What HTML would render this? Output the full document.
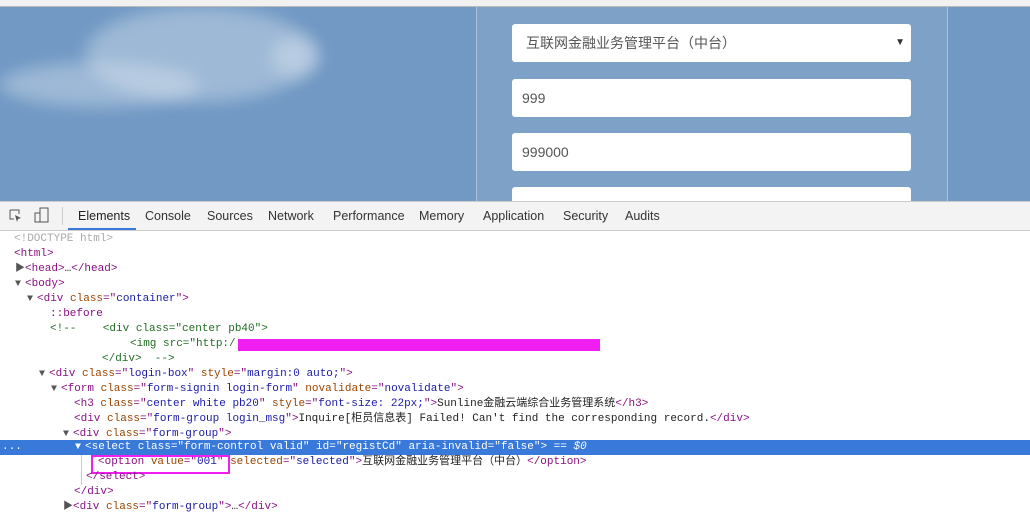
<!DOCTYPE html>
<html><head><meta charset="utf-8"><style>
body{margin:0;width:1030px;height:505px;overflow:hidden;background:#fff;position:relative;font-family:"Liberation Sans","Noto Sans CJK SC",sans-serif}
.top{position:absolute;left:0;top:0;width:1030px;height:6px;background:#f1f1f1;border-bottom:1px solid #bbb}
.sky{position:absolute;left:0;top:7px;width:1030px;height:194px;background:#7199c4;overflow:hidden}
.cloud{position:absolute;border-radius:50%;background:rgba(225,232,242,.4);filter:blur(8px)}
.panel{position:absolute;left:476px;top:0;width:470px;height:194px;background:rgba(140,170,205,.45);border-left:1px solid rgba(255,255,255,.35);border-right:1px solid rgba(255,255,255,.35)}
.inp{position:absolute;left:512px;width:399px;height:38px;background:#fff;border-radius:3px;font-size:14px;color:#555;line-height:38px;box-sizing:border-box;padding-left:10px}
.tb{position:absolute;left:0;top:201px;width:1030px;height:28px;background:#f3f3f3;border-top:1px solid #ccc;border-bottom:1px solid #ccc;font-size:12.5px;color:#333}
.tb span{position:absolute;top:7px}
.code{position:absolute;left:0;top:232px;width:1030px;font-family:"Liberation Mono","Noto Sans CJK SC",monospace;font-size:11px;color:#222}
.l{position:absolute;height:15px;line-height:15px;white-space:pre}
.t{color:#881280}.a{color:#994500}.v{color:#1a1aa6}.c{color:#236e25}.g{color:#aaa}
.tri{font-size:10px;color:#555;display:inline-block;width:10px}
.sel{background:#3879d9;color:#fff}
.sel .t,.sel .a,.sel .v{color:#fff}
</style></head><body>
<div class="top"></div>
<div class="sky">
<div class="cloud" style="left:85px;top:0;width:230px;height:95px"></div>
<div class="cloud" style="left:0;top:55px;width:200px;height:45px"></div>
<div class="cloud" style="left:270px;top:30px;width:50px;height:40px"></div>
<div class="panel"></div>
</div>
<div class="inp" style="top:24px;padding-left:14px">互联网金融业务管理平台（中台）<span style="position:absolute;right:6px;font-size:10px;color:#333">▼</span></div>
<div class="inp" style="top:79px">999</div>
<div class="inp" style="top:133px">999000</div>
<div class="inp" style="top:187px;height:14px;border-radius:3px 3px 0 0"></div>
<div class="tb">
<svg style="position:absolute;left:9px;top:7px" width="14" height="14" viewBox="0 0 14 14"><path d="M1 1h9v4M1 1v9h4" fill="none" stroke="#555"/><path d="M6 6l6 3-3 1-1 3z" fill="#555"/></svg>
<svg style="position:absolute;left:34px;top:5px" width="16" height="17" viewBox="0 0 16 17"><rect x="6" y="1" width="8" height="14" fill="none" stroke="#555"/><rect x="1" y="6" width="5" height="9" fill="none" stroke="#555"/></svg>
<div style="position:absolute;left:62px;top:5px;width:1px;height:18px;background:#ccc"></div>
<span style="left:78px;color:#222">Elements</span>
<div style="position:absolute;left:68px;top:26px;width:68px;height:2px;background:#3879d9"></div>
<span style="left:145px">Console</span><span style="left:207px">Sources</span><span style="left:268px">Network</span><span style="left:333px">Performance</span><span style="left:419px">Memory</span><span style="left:483px">Application</span><span style="left:563px">Security</span><span style="left:625px">Audits</span>
</div>
<div class="code">
<div class="l g" style="left:14px;top:0">&lt;!DOCTYPE html&gt;</div>
<div class="l t" style="left:14px;top:15px">&lt;html&gt;</div>
<div class="l" style="left:15px;top:30px"><span class="tri">▶</span><span class="t">&lt;head&gt;</span>…<span class="t">&lt;/head&gt;</span></div>
<div class="l" style="left:15px;top:45px"><span class="tri">▼</span><span class="t">&lt;body&gt;</span></div>
<div class="l" style="left:27px;top:60px"><span class="tri">▼</span><span class="t">&lt;div </span><span class="a">class</span><span class="t">="</span><span class="v">container</span><span class="t">"&gt;</span></div>
<div class="l t" style="left:50px;top:75px">::before</div>
<div class="l c" style="left:50px;top:90px">&lt;!--    &lt;div class="center pb40"&gt;</div>
<div class="l c" style="left:130px;top:105px">&lt;img src="http:/</div>
<div style="position:absolute;left:238px;top:107px;width:362px;height:12px;background:#f01ef0"></div>
<div class="l c" style="left:102px;top:120px">&lt;/div&gt;  --&gt;</div>
<div class="l" style="left:39px;top:135px"><span class="tri">▼</span><span class="t">&lt;div </span><span class="a">class</span><span class="t">="</span><span class="v">login-box</span><span class="t">" </span><span class="a">style</span><span class="t">="</span><span class="v">margin:0 auto;</span><span class="t">"&gt;</span></div>
<div class="l" style="left:51px;top:150px"><span class="tri">▼</span><span class="t">&lt;form </span><span class="a">class</span><span class="t">="</span><span class="v">form-signin login-form</span><span class="t">" </span><span class="a">novalidate</span><span class="t">="</span><span class="v">novalidate</span><span class="t">"&gt;</span></div>
<div class="l" style="left:74px;top:165px"><span class="t">&lt;h3 </span><span class="a">class</span><span class="t">="</span><span class="v">center white pb20</span><span class="t">" </span><span class="a">style</span><span class="t">="</span><span class="v">font-size: 22px;</span><span class="t">"&gt;</span>Sunline金融云端综合业务管理系统<span class="t">&lt;/h3&gt;</span></div>
<div class="l" style="left:74px;top:180px"><span class="t">&lt;div </span><span class="a">class</span><span class="t">="</span><span class="v">form-group login_msg</span><span class="t">"&gt;</span>Inquire[柜员信息表] Failed! Can't find the corresponding record.<span class="t">&lt;/div&gt;</span></div>
<div class="l" style="left:63px;top:195px"><span class="tri">▼</span><span class="t">&lt;div </span><span class="a">class</span><span class="t">="</span><span class="v">form-group</span><span class="t">"&gt;</span></div>
<div class="l sel" style="left:0;top:208px;width:1030px;height:15px"><span style="position:absolute;left:2px">...</span><span style="position:absolute;left:75px"><span class="tri" style="color:#fff">▼</span>&lt;select class="form-control valid" id="registCd" aria-invalid="false"&gt; == <i>$0</i></span></div>
<div style="position:absolute;left:81px;top:223px;width:1px;height:30px;background:#ccc"></div>
<div class="l" style="left:98px;top:223px"><span class="t">&lt;option </span><span class="a">value</span><span class="t">="</span><span class="v">001</span><span class="t">"</span> <span class="a">selected</span><span class="t">="</span><span class="v">selected</span><span class="t">"&gt;</span>互联网金融业务管理平台（中台）<span class="t">&lt;/option&gt;</span></div>
<div style="position:absolute;left:91px;top:223px;width:135px;height:15px;border:2px solid #f01ef0"></div>
<div class="l t" style="left:86px;top:238px">&lt;/select&gt;</div>
<div class="l t" style="left:74px;top:253px">&lt;/div&gt;</div>
<div class="l" style="left:63px;top:268px"><span class="tri">▶</span><span class="t">&lt;div </span><span class="a">class</span><span class="t">="</span><span class="v">form-group</span><span class="t">"&gt;</span>…<span class="t">&lt;/div&gt;</span></div>
</div>
</body></html>
